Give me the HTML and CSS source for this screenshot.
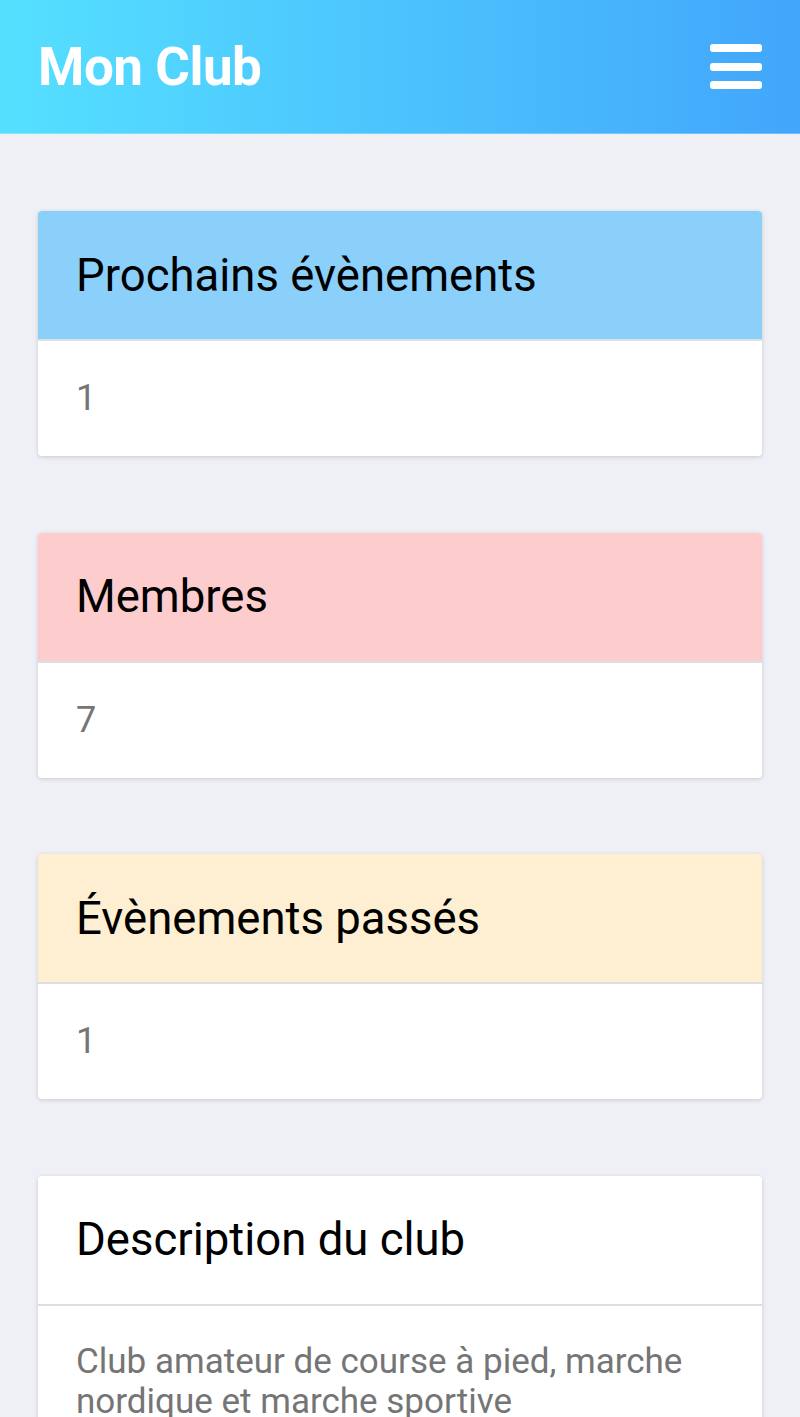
FILE: index.html
```html
<!DOCTYPE html>
<html lang="fr">
<head>
<meta charset="utf-8">
<title>Mon Club</title>
<link rel="stylesheet" href="styles.css">
</head>
<body>
<header class="topbar">
  <h1 class="brand">Mon Club</h1>
  <button class="menu" aria-label="Menu">
    <span class="bar"></span><span class="bar"></span><span class="bar"></span>
  </button>
</header>
<main class="content">
  <section class="card">
    <h2 class="card-head head-blue">Prochains évènements</h2>
    <div class="card-body"><span class="value">1</span></div>
  </section>
  <section class="card">
    <h2 class="card-head head-pink">Membres</h2>
    <div class="card-body"><span class="value">7</span></div>
  </section>
  <section class="card">
    <h2 class="card-head head-yellow">Évènements passés</h2>
    <div class="card-body"><span class="value">1</span></div>
  </section>
  <section class="card">
    <h2 class="card-head">Description du club</h2>
    <div class="card-body"><p class="desc">Club amateur de course à pied, marche nordique et marche sportive</p></div>
  </section>
</main>
</body>
</html>
```
FILE: styles.css
```css
* { box-sizing: border-box; }
html, body { margin: 0; padding: 0; }
body {
  background: #eff0f6;
  font-family: Roboto, "Noto Sans", Arial, sans-serif;
  color: #000;
}
.topbar {
  height: 134px;
  padding: 0 38px;
  display: flex;
  align-items: center;
  justify-content: space-between;
  background: linear-gradient(to right, #55e0ff, #42a6fb);
  border-bottom: 1px solid rgba(255,255,255,0.25);
}
.brand {
  margin: 0;
  font-size: 53px;
  font-weight: 700;
  color: #fff;
  letter-spacing: -0.5px;
}
.menu {
  background: none;
  border: 0;
  padding: 0;
  width: 52px;
  display: flex;
  flex-direction: column;
  gap: 10.5px;
}
.bar {
  display: block;
  height: 8px;
  width: 52px;
  background: #fff;
  border-radius: 3px;
}
.content {
  padding: 77px 38px;
  display: flex;
  flex-direction: column;
  gap: 76.5px;
}
.card {
  background: #fff;
  border-radius: 4px;
  box-shadow: 0 1px 4px rgba(0,0,0,0.16);
  overflow: hidden;
}
.card-head {
  margin: 0;
  height: 130px;
  padding: 0 38px;
  display: flex;
  align-items: center;
  font-size: 45.5px;
  font-weight: 400;
  border-bottom: 2px solid #dedede;
}
.head-blue { background: #8bd0fb; }
.head-pink { background: #fdcccc; }
.head-yellow { background: #feefd2; }
.card-body {
  padding: 36px 38px 37px;
  color: #757575;
}
.value {
  display: block;
  font-size: 36px;
  line-height: 42px;
}
.desc {
  margin: 0;
  font-size: 35px;
  line-height: 40px;
}
```
